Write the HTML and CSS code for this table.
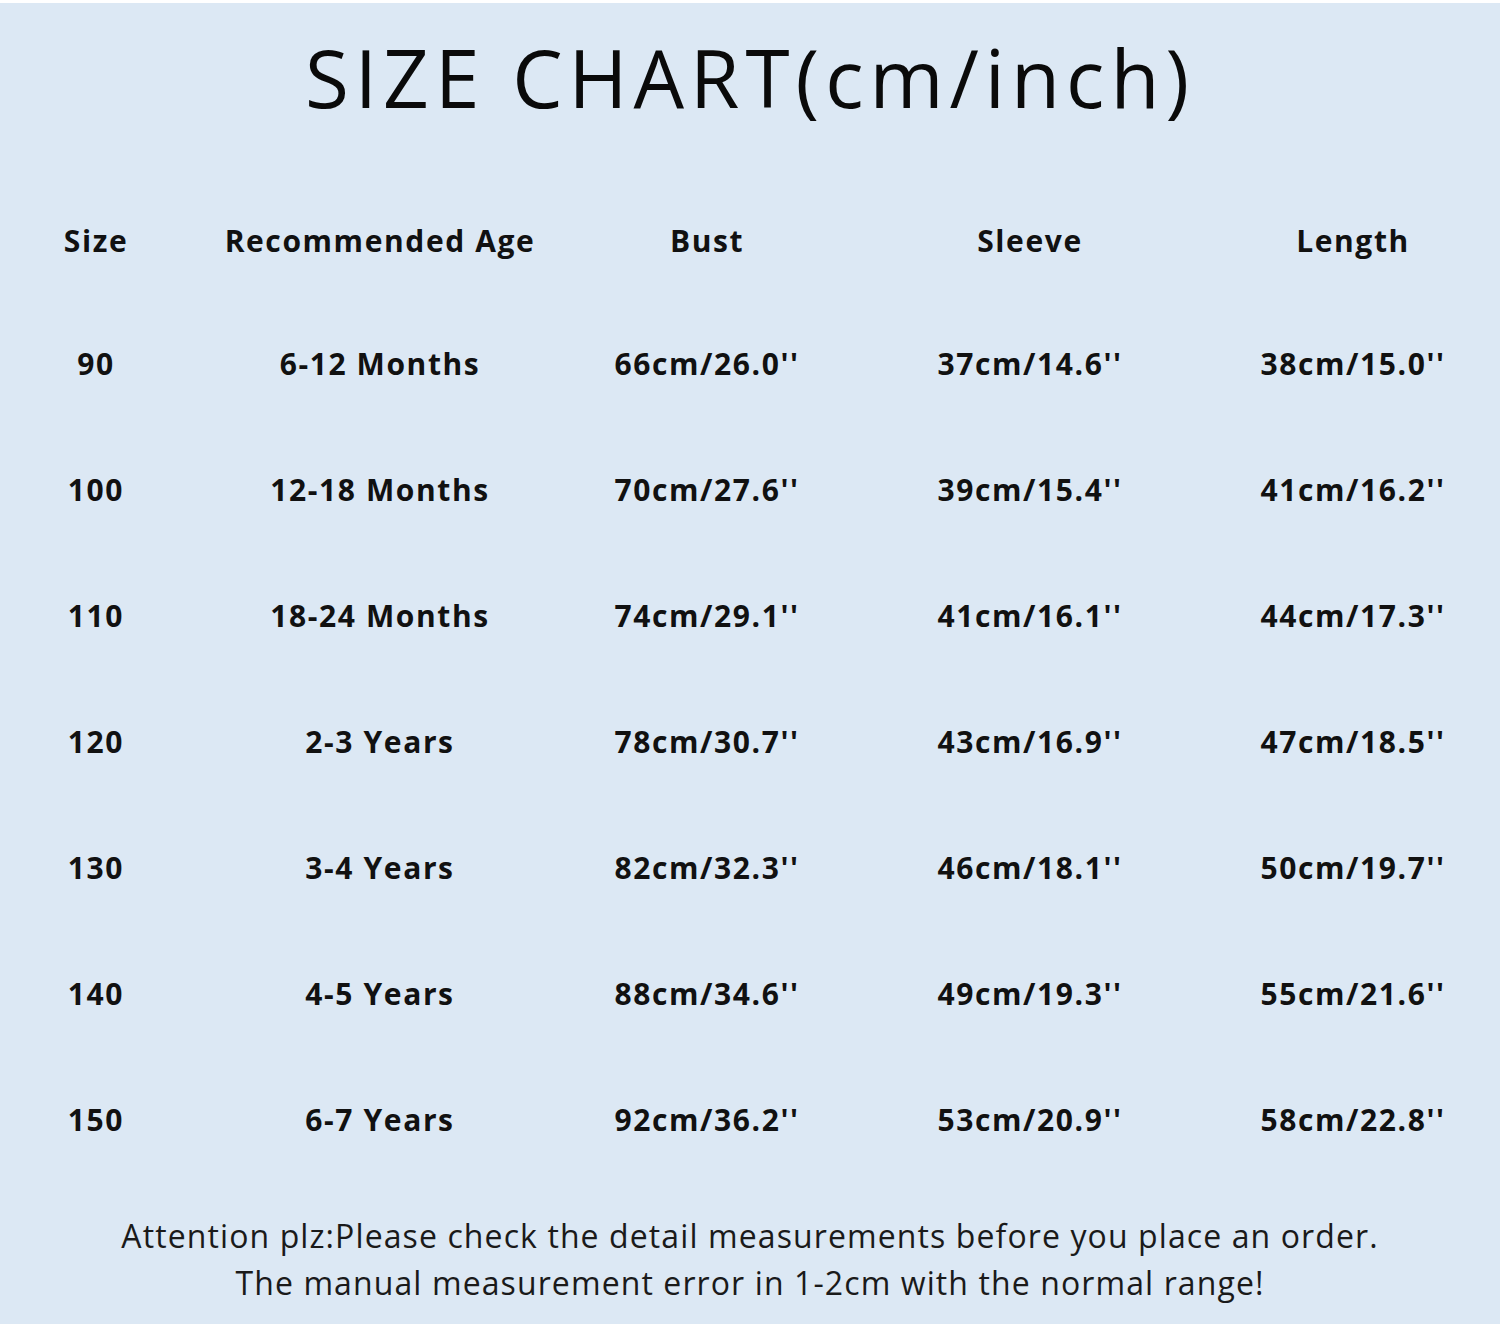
FILE: index.html
```html
<!DOCTYPE html>
<html>
<head>
<meta charset="utf-8">
<link rel="stylesheet" href="styles.css">
</head>
<body>
<div class="chart">
  <h1 class="title">SIZE CHART(cm/inch)</h1>
  <div class="table">
    <div class="row head">
      <div>Size</div><div>Recommended Age</div><div>Bust</div><div>Sleeve</div><div>Length</div>
    </div>
    <div class="row"><div>90</div><div>6-12 Months</div><div>66cm/26.0''</div><div>37cm/14.6''</div><div>38cm/15.0''</div></div>
    <div class="row"><div>100</div><div>12-18 Months</div><div>70cm/27.6''</div><div>39cm/15.4''</div><div>41cm/16.2''</div></div>
    <div class="row"><div>110</div><div>18-24 Months</div><div>74cm/29.1''</div><div>41cm/16.1''</div><div>44cm/17.3''</div></div>
    <div class="row"><div>120</div><div>2-3 Years</div><div>78cm/30.7''</div><div>43cm/16.9''</div><div>47cm/18.5''</div></div>
    <div class="row"><div>130</div><div>3-4 Years</div><div>82cm/32.3''</div><div>46cm/18.1''</div><div>50cm/19.7''</div></div>
    <div class="row"><div>140</div><div>4-5 Years</div><div>88cm/34.6''</div><div>49cm/19.3''</div><div>55cm/21.6''</div></div>
    <div class="row"><div>150</div><div>6-7 Years</div><div>92cm/36.2''</div><div>53cm/20.9''</div><div>58cm/22.8''</div></div>
  </div>
  <div class="note">
    <p>Attention plz:Please check the detail measurements before you place an order.</p>
    <p>The manual measurement error in 1-2cm with the normal range!</p>
  </div>
</div>
</body>
</html>
```
FILE: styles.css
```css
html, body {
  margin: 0;
  padding: 0;
  background: #ffffff;
}
.chart {
  margin-top: 3px;
  height: 1321px;
  background: #dce8f4;
  display: flex;
  flex-direction: column;
  color: #111111;
}
.title {
  margin: 0;
  height: 177px;
  padding-top: 24px;
  box-sizing: border-box;
  font-family: "Open Sans", sans-serif;
  font-style: normal;
  font-weight: 400;
  font-size: 80px;
  line-height: 100px;
  letter-spacing: 6px;
  text-align: center;
  color: #0a0a0a;
}
.table {
  display: flex;
  flex-direction: column;
  font-family: "Open Sans", sans-serif;
  font-weight: 700;
  font-size: 30px;
  letter-spacing: 1.6px;
}
.row {
  display: grid;
  grid-template-columns: 192px 376px 278px 368px 278px;
  height: 126px;
  align-items: center;
  text-align: center;
}
.row.head {
  height: 120px;
}
.note {
  padding-top: 30px;
  font-family: "Open Sans", sans-serif;
  font-size: 32px;
  letter-spacing: 1.1px;
  text-align: center;
  color: #1a1a1a;
}
.note p {
  margin: 0;
  line-height: 47px;
}
```
